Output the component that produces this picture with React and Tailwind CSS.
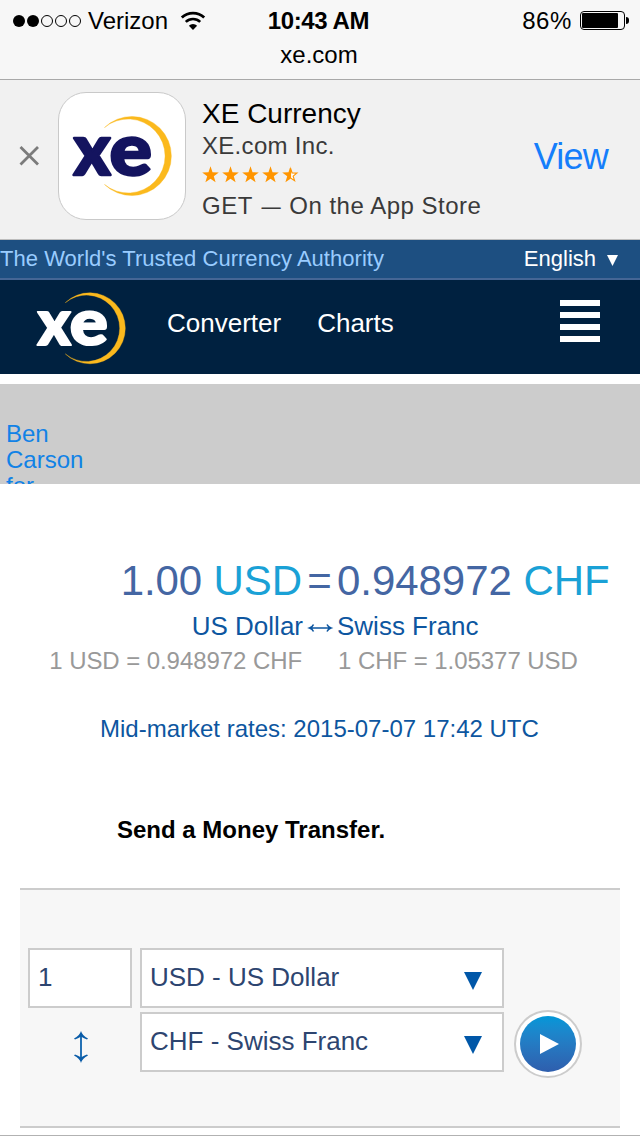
const STAR = "M8 0.3 L9.9 5.9 L15.8 6 L11.1 9.6 L12.8 15.3 L8 11.9 L3.2 15.3 L4.9 9.6 L0.2 6 L6.1 5.9 Z";
const stars = [1, 2, 3, 4];

function XeLogo({ className, color }) {
  return (
    <svg viewBox="-60 -56 102 98" className={className}>
      <path
        d="M-26.5 -28.5 A39.5 39.5 0 1 1 -26.5 28.5 A37 37 0 1 0 -26.5 -28.5 Z"
        fill="#fbb91d"
        stroke="#fbb91d"
        strokeWidth="0.4"
        strokeLinejoin="round"
      />
      <g
        fontFamily="Lato, sans-serif"
        fontWeight="900"
        fontSize="72"
        fill={color}
        stroke={color}
        strokeWidth="2.4"
        strokeLinejoin="round"
      >
        <text transform="translate(-57.5 18.5) scale(0.97 1)">x</text>
        <text transform="translate(-21.5 18.5) scale(1.1 1)">e</text>
      </g>
    </svg>
  );
}

function StatusBar() {
  return (
    <div className="h-20 border-b border-[#a9a9a9] bg-[#f7f7f7] text-2xl text-black">
      <div className="grid h-[41px] grid-cols-3 items-center">
        <div className="flex items-center pl-[13px]">
          <div className="flex gap-[2px]">
            <span className="h-3 w-3 rounded-full bg-black"></span>
            <span className="h-3 w-3 rounded-full bg-black"></span>
            <span className="h-3 w-3 rounded-full border border-black"></span>
            <span className="h-3 w-3 rounded-full border border-black"></span>
            <span className="h-3 w-3 rounded-full border border-black"></span>
          </div>
          <span className="ml-[7px]">Verizon</span>
          <svg viewBox="0 0 26 20" className="ml-3 h-5 w-[26px]">
            <path d="M1.8 6.6 A16.2 16.2 0 0 1 24.2 6.6" fill="none" stroke="black" strokeWidth="2.8" />
            <path d="M5.8 10.9 A10.4 10.4 0 0 1 20.2 10.9" fill="none" stroke="black" strokeWidth="2.6" />
            <path d="M13 19 L8.9 14.8 A5.8 5.8 0 0 1 17.1 14.8 Z" fill="black" />
          </svg>
        </div>
        <div className="pr-[3px] text-center font-bold tracking-[-0.4px]">10:43 AM</div>
        <div className="flex items-center justify-end pr-[11px]">
          <span className="tracking-[0.6px]">86%</span>
          <span className="ml-[8px] flex h-[19px] w-[45px] rounded-[4px] border border-black p-px">
            <span className="w-[36px] rounded-[1px] bg-black"></span>
          </span>
          <span className="ml-px h-[7px] w-[3px] rounded-r-full bg-black"></span>
        </div>
      </div>
      <div className="pr-[2px] text-center leading-[28px]">xe.com</div>
    </div>
  );
}

function AppBanner() {
  return (
    <div className="flex h-40 items-center border-b border-[#bdbdbd] bg-[#f1f1f1]">
      <svg viewBox="0 0 20 20" className="mt-[-7px] ml-[19px] h-5 w-5 shrink-0">
        <path d="M1.5 1 L19 18.5 M19 1 L1.5 18.5" stroke="#7b7b7b" strokeWidth="2.8" fill="none" />
      </svg>
      <div className="mt-[-7px] ml-[19px] h-32 w-32 shrink-0 rounded-[28px] border border-[#c9c9c9] bg-white pt-[7px] pl-3">
        <XeLogo className="h-[98px] w-[102px]" color="#14145f" />
      </div>
      <div className="ml-4 h-full pt-[17px] text-2xl text-[#3a3a3a]">
        <p className="text-[28px] leading-[33px] text-black">XE Currency</p>
        <p className="leading-8 tracking-[0.3px]">XE.com Inc.</p>
        <div className="flex h-[25px] items-center gap-[3px] text-[#ff9500]">
          {stars.map((s) => (
            <svg key={s} viewBox="0 0 16 16" className="h-[17px] w-[17px]">
              <path d={STAR} fill="currentColor" />
            </svg>
          ))}
          <svg viewBox="0 0 16 16" className="h-[17px] w-[17px]">
            <path d="M8 2 L9.5 6.5 L14 6.7 L10.5 9.5 L11.8 13.8 L8 11.2 Z" fill="white" stroke="currentColor" strokeWidth="1.1" />
            <path d="M8 0.3 V11.9 L3.2 15.3 L4.9 9.6 L0.2 6 L6.1 5.9 Z" fill="currentColor" />
          </svg>
        </div>
        <p className="pt-[5px] leading-7 tracking-[0.5px]">
          GET <span className="-mx-px inline-block scale-x-80">—</span> On the App Store
        </p>
      </div>
      <a className="mt-[-5px] mr-8 ml-auto text-[36px] tracking-[-0.8px] text-[#157efb]">View</a>
    </div>
  );
}

function SiteHeader() {
  return (
    <header>
      <div className="flex h-10 items-center justify-between border-b-2 border-[#456695] bg-[#1d4f81] pr-[22px] pb-[2px] text-[22px]">
        <span className="tracking-[0.03px] text-[#99ccff]">The World's Trusted Currency Authority</span>
        <span className="flex items-center text-white">
          English
          <svg viewBox="0 0 11 11" className="mt-[4px] ml-[11px] h-[11px] w-[11px]">
            <path d="M0 0 H11 L5.5 11 Z" fill="white" />
          </svg>
        </span>
      </div>
      <nav className="flex h-[94px] items-center bg-[#002140] pr-10 pl-[35px] text-[26px] text-white">
        <XeLogo className="mt-[-11px] h-[88px] w-[92px]" color="#ffffff" />
        <a className="mt-[-8px] ml-[40px]">Converter</a>
        <a className="mt-[-8px] ml-[36px]">Charts</a>
        <div className="mt-[-12px] ml-auto flex w-10 flex-col gap-[6px]">
          <span className="h-[6px] bg-white"></span>
          <span className="h-[6px] bg-white"></span>
          <span className="h-[6px] bg-white"></span>
          <span className="h-[6px] bg-white"></span>
        </div>
      </nav>
    </header>
  );
}

function Rates() {
  return (
    <section className="h-[404px] pt-[71px]">
      <div className="flex h-[50px] items-center text-[42px] text-[#4466a3]">
        <div className="w-[302px] text-right tracking-[-0.1px] whitespace-nowrap">
          1.00 <span className="text-[#1aa1d6]">USD</span>
        </div>
        <div className="w-[35px] text-center">=</div>
        <div className="tracking-[-0.05px] whitespace-nowrap">
          0.948972 <span className="text-[#1aa1d6]">CHF</span>
        </div>
      </div>
      <div className="mt-px flex h-9 items-center pt-[4px] text-[26px] text-[#0d56a0]">
        <div className="w-[303px] text-right">US Dollar</div>
        <svg viewBox="0 0 34 14" className="mt-[3px] h-[14px] w-[34px]">
          <path
            d="M7 7 H27.5 M10.5 3.5 Q9.5 6 6.5 7 Q9.5 8 10.5 10.5 M24 3.5 Q25 6 28 7 Q25 8 24 10.5"
            fill="none"
            stroke="#0d56a0"
            strokeWidth="1.5"
          />
        </svg>
        <div>Swiss Franc</div>
      </div>
      <div className="mt-px flex h-[36px] items-center text-2xl text-[#999999]">
        <div className="w-[302px] text-right tracking-[-0.07px]">1 USD = 0.948972 CHF</div>
        <div className="ml-[36px] tracking-[-0.05px]">1 CHF = 1.05377 USD</div>
      </div>
      <p className="mt-[32px] pl-[100px] text-2xl leading-9 text-[#0d56a0]">Mid-market rates: 2015-07-07 17:42 UTC</p>
      <p className="mt-[65px] pl-[117px] text-2xl leading-9 font-bold text-black">Send a Money Transfer.</p>
    </section>
  );
}

function CurrencySelect({ label }) {
  return (
    <div className="flex h-[60px] w-[364px] items-center justify-between border-2 border-[#cccccc] bg-white pr-5 pl-2">
      <span className="mt-[-2px]">{label}</span>
      <svg viewBox="0 0 18 18" className="mt-[6px] h-[18px] w-[18px]">
        <path d="M0 0 H18 L9 18 Z" fill="#0057a8" />
      </svg>
    </div>
  );
}

function ConverterForm() {
  return (
    <section className="mx-5 flex h-60 gap-2 border-y-2 border-[#cccccc] bg-[#f7f7f7] pt-[58px] pl-2 text-[26px] text-[#2d4570]">
      <div className="w-[104px]">
        <div className="flex h-[60px] items-center border-2 border-[#cccccc] bg-white pl-2">
          <span className="mt-[-2px]">1</span>
        </div>
        <svg viewBox="0 0 14 32" className="mt-[23px] ml-[46px] h-8 w-[14px]">
          <path d="M7 2 V30" stroke="#0d62ad" strokeWidth="1.8" fill="none" />
          <path d="M7 0 Q8.5 5 14 7.5 L13 8.5 Q9 7 7 5.5 Q5 7 1 8.5 L0 7.5 Q5.5 5 7 0 Z" fill="#0a5ca8" />
          <path d="M7 32 Q8.5 27 14 24.5 L13 23.5 Q9 25 7 26.5 Q5 25 1 23.5 L0 24.5 Q5.5 27 7 32 Z" fill="#0a5ca8" />
        </svg>
      </div>
      <div className="flex flex-col gap-1">
        <CurrencySelect label="USD - US Dollar" />
        <CurrencySelect label="CHF - Swiss Franc" />
      </div>
      <button className="mt-[62px] ml-[2px] h-[68px] w-[68px] rounded-full border-2 border-[#cccccc] bg-white p-1">
        <span className="flex h-14 w-14 items-center justify-center rounded-full bg-linear-to-b from-[#0097d8] to-[#2e5ead]">
          <svg viewBox="0 0 19 20" className="ml-[3px] h-5 w-[19px]">
            <path d="M0 0 L19 10 L0 20 Z" fill="white" />
          </svg>
        </span>
      </button>
    </section>
  );
}

export default function App() {
  return (
    <div className="h-[1136px] w-[640px] overflow-hidden border-b border-[#b2b2b2] bg-white font-['Liberation_Sans',Arial,sans-serif]">
      <StatusBar />
      <AppBanner />
      <SiteHeader />
      <div className="mt-[10px] h-[100px] overflow-hidden bg-[#cccccc] pt-[37px] pl-[6px]">
        <a className="block w-20 text-2xl leading-[26px] text-[#1182e6]">Ben Carson for</a>
      </div>
      <Rates />
      <ConverterForm />
    </div>
  );
}
